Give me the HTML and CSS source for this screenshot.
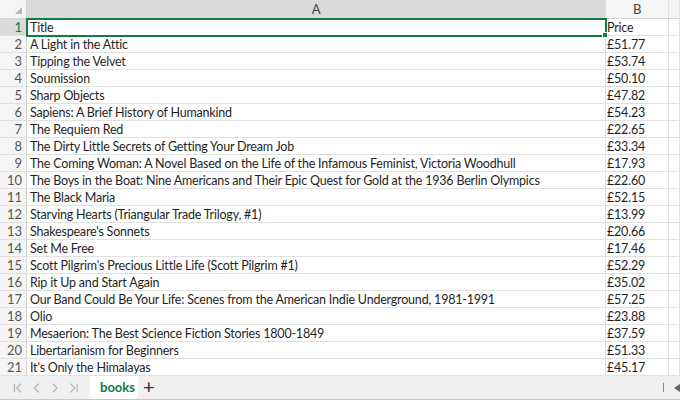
FILE: index.html
```html
<!DOCTYPE html>
<html lang="en">
<head>
  <meta charset="UTF-8">
  <title>books</title>
  <link rel="stylesheet" href="styles.css">
</head>
<body>
  <div class="sheet">
    <div class="row head">
      <div class="cell rh corner"><span class="tri"></span></div>
      <div class="cell ca sel">A</div>
      <div class="cell cb">B</div>
      <div class="cell cc"></div>
    </div>
    <div class="row">
      <div class="cell rh sel">1</div>
      <div class="cell ca active">Title<span class="handle"></span></div>
      <div class="cell cb">Price</div>
      <div class="cell cc"></div>
    </div>
    <div id="rows"></div>
  </div>

  <div class="tabbar">
    <div class="nav">
      <svg width="12" height="12" viewBox="0 0 12 12"><path d="M2.5 1.5v9M9.5 1.5L5 6l4.5 4.5" /></svg>
      <svg width="12" height="12" viewBox="0 0 12 12"><path d="M8 1.5L3.5 6 8 10.5" /></svg>
      <svg width="12" height="12" viewBox="0 0 12 12"><path d="M4 1.5L8.5 6 4 10.5" /></svg>
      <svg width="12" height="12" viewBox="0 0 12 12"><path d="M9.5 1.5v9M2.5 1.5L7 6l-4.5 4.5" /></svg>
    </div>
    <div class="tab">books</div>
    <div class="plus">+</div>
    <div class="spacer"></div>
    <div class="split"></div>
    <div class="scroll">
      <svg width="6" height="8" viewBox="0 0 6 8"><path d="M0 4L6 0v8z" /></svg>
    </div>
  </div>

  <script>
    const books = [
      ["A Light in the Attic", "£51.77"],
      ["Tipping the Velvet", "£53.74"],
      ["Soumission", "£50.10"],
      ["Sharp Objects", "£47.82"],
      ["Sapiens: A Brief History of Humankind", "£54.23"],
      ["The Requiem Red", "£22.65"],
      ["The Dirty Little Secrets of Getting Your Dream Job", "£33.34"],
      ["The Coming Woman: A Novel Based on the Life of the Infamous Feminist, Victoria Woodhull", "£17.93"],
      ["The Boys in the Boat: Nine Americans and Their Epic Quest for Gold at the 1936 Berlin Olympics", "£22.60"],
      ["The Black Maria", "£52.15"],
      ["Starving Hearts (Triangular Trade Trilogy, #1)", "£13.99"],
      ["Shakespeare's Sonnets", "£20.66"],
      ["Set Me Free", "£17.46"],
      ["Scott Pilgrim's Precious Little Life (Scott Pilgrim #1)", "£52.29"],
      ["Rip it Up and Start Again", "£35.02"],
      ["Our Band Could Be Your Life: Scenes from the American Indie Underground, 1981-1991", "£57.25"],
      ["Olio", "£23.88"],
      ["Mesaerion: The Best Science Fiction Stories 1800-1849", "£37.59"],
      ["Libertarianism for Beginners", "£51.33"],
      ["It's Only the Himalayas", "£45.17"]
    ];

    const rows = document.getElementById("rows");
    books.forEach((book, i) => {
      const row = document.createElement("div");
      row.className = "row";
      row.innerHTML = `
        <div class="cell rh">${i + 2}</div>
        <div class="cell ca">${book[0]}</div>
        <div class="cell cb">${book[1]}</div>
        <div class="cell cc"></div>
      `;
      rows.appendChild(row);
    });
  </script>
</body>
</html>
```

FILE: styles.css
```css
body {
  margin: 0;
  width: 680px;
  height: 401px;
  overflow: hidden;
  background-color: #fff;
  font-family: Lato, "Open Sans", sans-serif;
  color: #1f1f1f;
}

.sheet {
  height: 376px;
  overflow: hidden;
}

.row {
  display: flex;
  height: 17px;
}

.row.head {
  height: 19px;
}

.cell {
  box-sizing: border-box;
  height: 100%;
  border-right: 1px solid #e1e1e1;
  border-bottom: 1px solid #e1e1e1;
  font-size: 12.5px;
  letter-spacing: -0.2px;
  line-height: 17px;
  padding-left: 3px;
  white-space: nowrap;
  overflow: visible;
  flex-shrink: 0;
}

.rh {
  width: 27px;
  padding: 0 4px 0 0;
  text-align: right;
  background-color: #f5f5f5;
  color: #555;
  font-size: 13px;
  letter-spacing: 0;
  border-right-color: #d4d4d4;
}

.ca {
  width: 579px;
  position: relative;
}

.cb {
  width: 63px;
  padding-left: 1px;
}

.cc {
  flex: 1;
}

.head .cell {
  background-color: #f5f5f5;
  color: #444;
  text-align: center;
  padding: 0;
  font-size: 13px;
  line-height: 19px;
  border-bottom-color: #d4d4d4;
}

.head .cell.sel, .rh.sel {
  background-color: #dadada;
}

.rh.sel {
  color: #107c41;
}

.corner {
  position: relative;
}

.tri {
  position: absolute;
  right: 4px;
  bottom: 4px;
  width: 0;
  height: 0;
  border-left: 7px solid transparent;
  border-bottom: 7px solid #b5b5b5;
}

/* cella attiva A1 */
.active {
  outline: 2px solid #107c41;
  outline-offset: -1px;
  z-index: 1;
}

.handle {
  position: absolute;
  right: -3px;
  bottom: -3px;
  width: 4px;
  height: 4px;
  background-color: #107c41;
  border: 1px solid #fff;
}

.tabbar {
  display: flex;
  align-items: stretch;
  height: 23px;
  background-color: #f0f0f0;
  border-bottom: 1px solid #c6c6c6;
  font-size: 13px;
}

.nav {
  display: flex;
  align-items: center;
  gap: 7px;
  padding-left: 12px;
  width: 79px;
  box-sizing: border-box;
}

.nav svg path {
  fill: none;
  stroke: #a6a6a6;
  stroke-width: 1.1;
}

.tab {
  background-color: #fff;
  color: #107c41;
  font-weight: bold;
  padding: 0 10px;
  line-height: 22px;
  margin-left: 11px;
  border-radius: 0 0 4px 4px;
  width: 28px;
  text-align: center;
}

.plus {
  color: #333;
  font-size: 20px;
  line-height: 21px;
  padding-left: 5px;
}

.spacer {
  flex: 1;
}

.split {
  width: 1px;
  height: 9px;
  align-self: center;
  background-color: #8a8a8a;
  margin-right: 10px;
}

.scroll {
  display: flex;
  align-items: center;
  width: 6px;
  overflow: hidden;
}

.scroll svg path {
  fill: #666;
}
```
